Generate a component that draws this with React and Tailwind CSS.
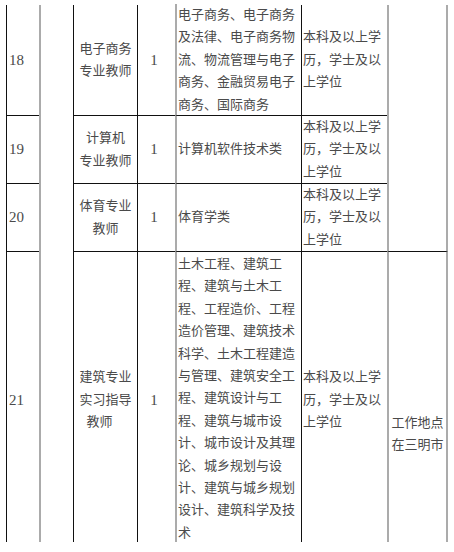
import React from "react";

const font = { fontFamily: '"Liberation Serif", "Noto Sans CJK SC", serif' };

const dark = "border-l border-l-[#111]";
const gray = "border-l-2 border-l-[#ababab]";

function Lines({ lines, className = "" }) {
  return (
    <div className={className}>
      {lines.map((l, i) => (
        <div key={i} className="whitespace-nowrap">{l}</div>
      ))}
    </div>
  );
}

const degree = ["本科及以上学", "历，学士及以", "上学位"];
const num = "text-[15px]";

export default function App() {
  return (
    <div className="w-[454px] h-[552px] bg-white overflow-hidden" style={font}>
      <div className="ml-[6px] mt-[5px] grid grid-cols-[33px_34px_64px_38px_126px_86px_61px] grid-rows-[111px_68px_68px_290px] text-[13px] leading-[22.4px] text-[#4a4a4a]">
        {/* Row 18 */}
        <div className={`col-start-1 row-start-1 ${dark} ${num} border-b border-b-[#111] flex items-center pl-[2px]`}>18</div>
        <div className={`col-start-2 row-start-1 row-span-4 ${gray}`}></div>
        <div className={`col-start-3 row-start-1 ${dark} border-b border-b-[#111] flex items-center justify-center`}>
          <Lines lines={["电子商务", "专业教师"]} className="text-center" />
        </div>
        <div className={`col-start-4 row-start-1 ${dark} ${num} border-b border-b-[#111] flex items-center justify-center pr-[5px]`}>1</div>
        <div className={`col-start-5 row-start-1 ${gray} border-b border-b-[#111] pl-[1px] -mt-[1px]`}>
          <Lines lines={["电子商务、电子商务", "及法律、电子商务物", "流、物流管理与电子", "商务、金融贸易电子", "商务、国际商务"]} />
        </div>
        <div className={`col-start-6 row-start-1 ${dark} border-b border-b-[#111] flex items-center pl-[1px]`}>
          <Lines lines={degree} />
        </div>
        <div className={`col-start-7 row-start-1 row-span-3 ${gray} border-r-2 border-r-[#ababab] border-b border-b-[#111]`}></div>

        {/* Row 19 */}
        <div className={`col-start-1 row-start-2 ${dark} ${num} border-b border-b-[#111] flex items-center pl-[2px]`}>19</div>
        <div className={`col-start-3 row-start-2 ${dark} border-b border-b-[#111] flex items-center justify-center`}>
          <Lines lines={["计算机", "专业教师"]} className="text-center" />
        </div>
        <div className={`col-start-4 row-start-2 ${dark} ${num} border-b border-b-[#111] flex items-center justify-center pr-[5px]`}>1</div>
        <div className={`col-start-5 row-start-2 ${gray} border-b border-b-[#111] flex items-center pl-[1px]`}>计算机软件技术类</div>
        <div className={`col-start-6 row-start-2 ${dark} border-b border-b-[#111] flex items-center pl-[1px]`}>
          <Lines lines={degree} />
        </div>

        {/* Row 20 */}
        <div className={`col-start-1 row-start-3 ${dark} ${num} border-b border-b-[#111] flex items-center pl-[2px]`}>20</div>
        <div className={`col-start-3 row-start-3 ${dark} border-b border-b-[#111] flex items-center justify-center`}>
          <Lines lines={["体育专业", "教师"]} className="text-center" />
        </div>
        <div className={`col-start-4 row-start-3 ${dark} ${num} border-b border-b-[#111] flex items-center justify-center pr-[5px]`}>1</div>
        <div className={`col-start-5 row-start-3 ${gray} border-b border-b-[#111] flex items-center pl-[1px]`}>体育学类</div>
        <div className={`col-start-6 row-start-3 ${dark} border-b border-b-[#111] flex items-center pl-[1px]`}>
          <Lines lines={degree} />
        </div>

        {/* Row 21 */}
        <div className={`col-start-1 row-start-4 ${dark} ${num} flex items-center pl-[2px] pt-[6px]`}>21</div>
        <div className={`col-start-3 row-start-4 ${dark} flex items-center justify-center pt-[6px]`}>
          <div className="text-center">
            <div>建筑专业</div>
            <div>实习指导</div>
            <div className="pr-[12px]">教师</div>
          </div>
        </div>
        <div className={`col-start-4 row-start-4 ${dark} ${num} flex items-center justify-center pr-[5px] pt-[6px]`}>1</div>
        <div className={`col-start-5 row-start-4 ${gray} pl-[1px] pt-[1px]`}>
          <Lines
            lines={[
              "土木工程、建筑工",
              "程、建筑与土木工",
              "程、工程造价、工程",
              "造价管理、建筑技术",
              "科学、土木工程建造",
              "与管理、建筑安全工",
              "程、建筑设计与工",
              "程、建筑与城市设",
              "计、城市设计及其理",
              "论、城乡规划与设",
              "计、建筑与城乡规划",
              "设计、建筑科学及技",
              "术",
            ]}
          />
        </div>
        <div className={`col-start-6 row-start-4 ${dark} flex items-center pl-[1px] pt-[6px]`}>
          <Lines lines={degree} />
        </div>
        <div className={`col-start-7 row-start-4 ${gray} border-r-2 border-r-[#ababab] flex items-center justify-center pt-[74px]`}>
          <Lines lines={["工作地点", "在三明市"]} />
        </div>
      </div>
    </div>
  );
}
